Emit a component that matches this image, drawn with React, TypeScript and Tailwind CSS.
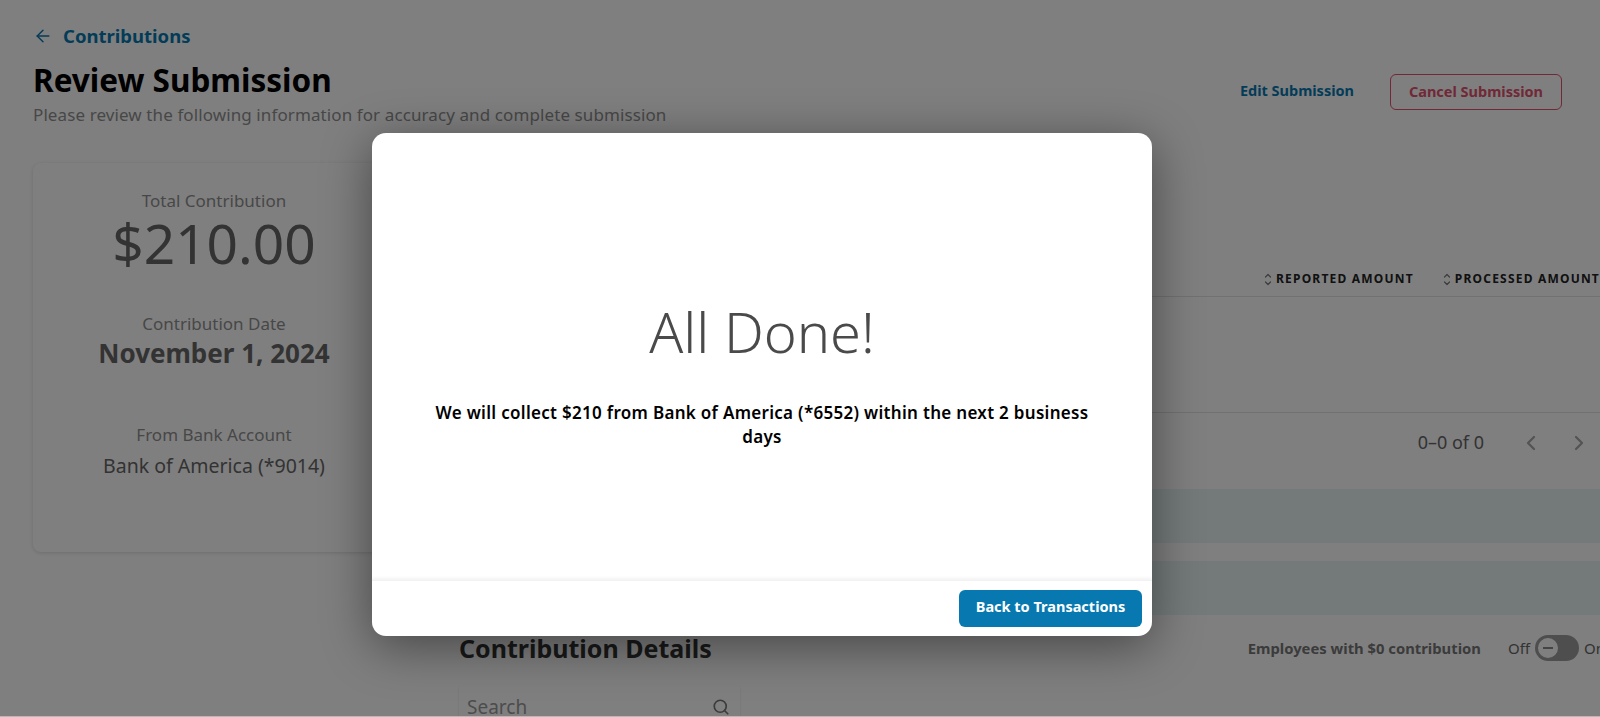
import { ArrowLeft, ChevronLeft, ChevronRight, Search } from 'lucide-react'

function Stat({ label, className, children }: { label: string; className: string; children: React.ReactNode }) {
  return (
    <>
      <div className={`text-[17px] leading-6 text-[#8f8f8f] ${className}`}>{label}</div>
      {children}
    </>
  )
}

function SummaryCard() {
  return (
    <div className="w-[362px] h-[389px] shrink-0 rounded-lg bg-white shadow-[0_1px_4px_rgba(0,0,0,0.15)] pt-[26px] text-center">
      <Stat label="Total Contribution" className="">
        <div className="text-[55px] leading-[60px] text-[#666]">$210.00</div>
      </Stat>
      <Stat label="Contribution Date" className="mt-[39px]">
        <div className="mt-px text-[26px] leading-8 font-bold text-[#666]">November 1, 2024</div>
      </Stat>
      <Stat label="From Bank Account" className="mt-[54px]">
        <div className="mt-[7px] text-[19.5px] leading-6 text-[#666]">Bank of America (*9014)</div>
      </Stat>
    </div>
  )
}

function SortHeader({ label }: { label: string }) {
  return (
    <div className="flex items-center gap-1 shrink-0 text-[12px] leading-4 font-bold tracking-[1.2px] text-[#222] whitespace-nowrap">
      <svg width="8" height="13" viewBox="0 0 8 13" fill="none" stroke="#777" strokeWidth="1.2" strokeLinecap="round" strokeLinejoin="round">
        <path d="M1.5 4 4 1.5 6.5 4" />
        <path d="M1.5 9 4 11.5 6.5 9" />
      </svg>
      {label}
    </div>
  )
}

function DetailsColumn() {
  return (
    <div className="flex-1 min-w-0">
      <div className="h-[134px] border-b border-[#e2e2e2] flex items-end justify-end gap-[29px] pb-[9px]">
        <SortHeader label="REPORTED AMOUNT" />
        <SortHeader label="PROCESSED AMOUNT" />
      </div>
      <div className="h-[116px] border-b border-[#e2e2e2]" />
      <div className="h-[59px] flex items-center justify-end text-[18px] text-[#666]">
        <span>0–0 of 0</span>
        <ChevronLeft size={24} strokeWidth={2.25} className="ml-[35px] text-[#a8a8a8]" />
        <ChevronRight size={24} strokeWidth={2.25} className="ml-[24px] mr-[9px] text-[#a8a8a8]" />
      </div>
      <div className="mt-[17px] h-[54px] bg-[#e8f4f4]" />
      <div className="mt-[18px] h-[54px] bg-[#e8f4f4]" />
      <div className="mt-[17px] h-8 flex items-center justify-between">
        <h2 className="text-[25px] leading-8 font-bold text-[#333]">Contribution Details</h2>
        <div className="flex items-center text-[#666]">
          <span className="text-[14.8px] font-bold text-[#777]">Employees with $0 contribution</span>
          <span className="ml-[27px] text-[15px]">Off</span>
          <div className="ml-[5px] w-[44px] h-[26px] rounded-full bg-[#9c9c9c] flex items-center px-[1px]">
            <div className="w-[24px] h-[24px] rounded-full bg-white border-2 border-[#9c9c9c] flex items-center justify-center">
              <div className="w-[10px] h-[2px] bg-[#888]" />
            </div>
          </div>
          <span className="ml-[5px] w-[16px] text-[15px] overflow-hidden">On</span>
        </div>
      </div>
      <div className="mt-[21px] w-[281px] h-[44px] bg-white rounded shadow-sm flex items-center justify-between pl-2 pr-[10px]">
        <span className="text-[19px] leading-6 text-[#999]">Search</span>
        <Search size={18} strokeWidth={2.25} className="text-[#777]" />
      </div>
    </div>
  )
}

function DoneModal() {
  return (
    <div className="w-[780px] h-[503px] rounded-[14px] bg-white flex flex-col shadow-[0_10px_50px_rgba(0,0,0,0.45)] overflow-hidden">
      <div className="flex-1 pt-[166px] text-center">
        <h2 className="text-[56px] leading-[64px] font-[350] text-[#4a4a4a]">All Done!</h2>
        <p className="mt-[38px] mx-auto w-[670px] text-[17px] leading-6 font-semibold tracking-[0.3px] text-black">
          We will collect $210 from Bank of America (*6552) within the next 2 business days
        </p>
      </div>
      <div className="h-[56px] flex items-center justify-end pr-[10px] border-t border-[#f2f2f2] shadow-[0_-2px_3px_rgba(0,0,0,0.05)]">
        <button className="w-[183px] h-[37px] rounded-md bg-[#0779b0] text-white text-[14.5px] leading-[33px] pb-1 font-bold">
          Back to Transactions
        </button>
      </div>
    </div>
  )
}

export default function App() {
  return (
    <div className="relative h-[717px] overflow-hidden bg-white font-['Noto_Sans',sans-serif]">
      <div className="h-[163px] flex justify-between pl-[33px] pr-[38px]">
        <div className="pt-6">
          <a className="flex items-center gap-[10px] text-[18.5px] leading-6 font-bold text-[#0779b0]">
            <ArrowLeft size={20} strokeWidth={1.75} />
            Contributions
          </a>
          <h1 className="mt-3 text-[31.5px] leading-10 font-bold text-black">Review Submission</h1>
          <p className="mt-[3px] text-[17px] leading-6 tracking-[0.1px] text-[#8f8f8f]">
            Please review the following information for accuracy and complete submission
          </p>
        </div>
        <div className="pt-[74px] flex items-start">
          <span className="h-[34px] flex items-center text-[14.5px] font-bold text-[#0779b0]">Edit Submission</span>
          <button className="ml-[36px] w-[172px] h-[36px] rounded-md border border-[#e2506f] text-[14.5px] leading-[32px] pb-0.5 font-bold text-[#e2506f]">
            Cancel Submission
          </button>
        </div>
      </div>
      <div className="flex gap-16 pl-[33px]">
        <SummaryCard />
        <DetailsColumn />
      </div>

      {/* dim layer and dialog */}
      <div className="absolute inset-0 bg-black/50 pl-[372px] pt-[133px]">
        <DoneModal />
      </div>
      <div className="absolute inset-x-0 bottom-0 h-px bg-[#b8b8b8]" />
    </div>
  )
}
